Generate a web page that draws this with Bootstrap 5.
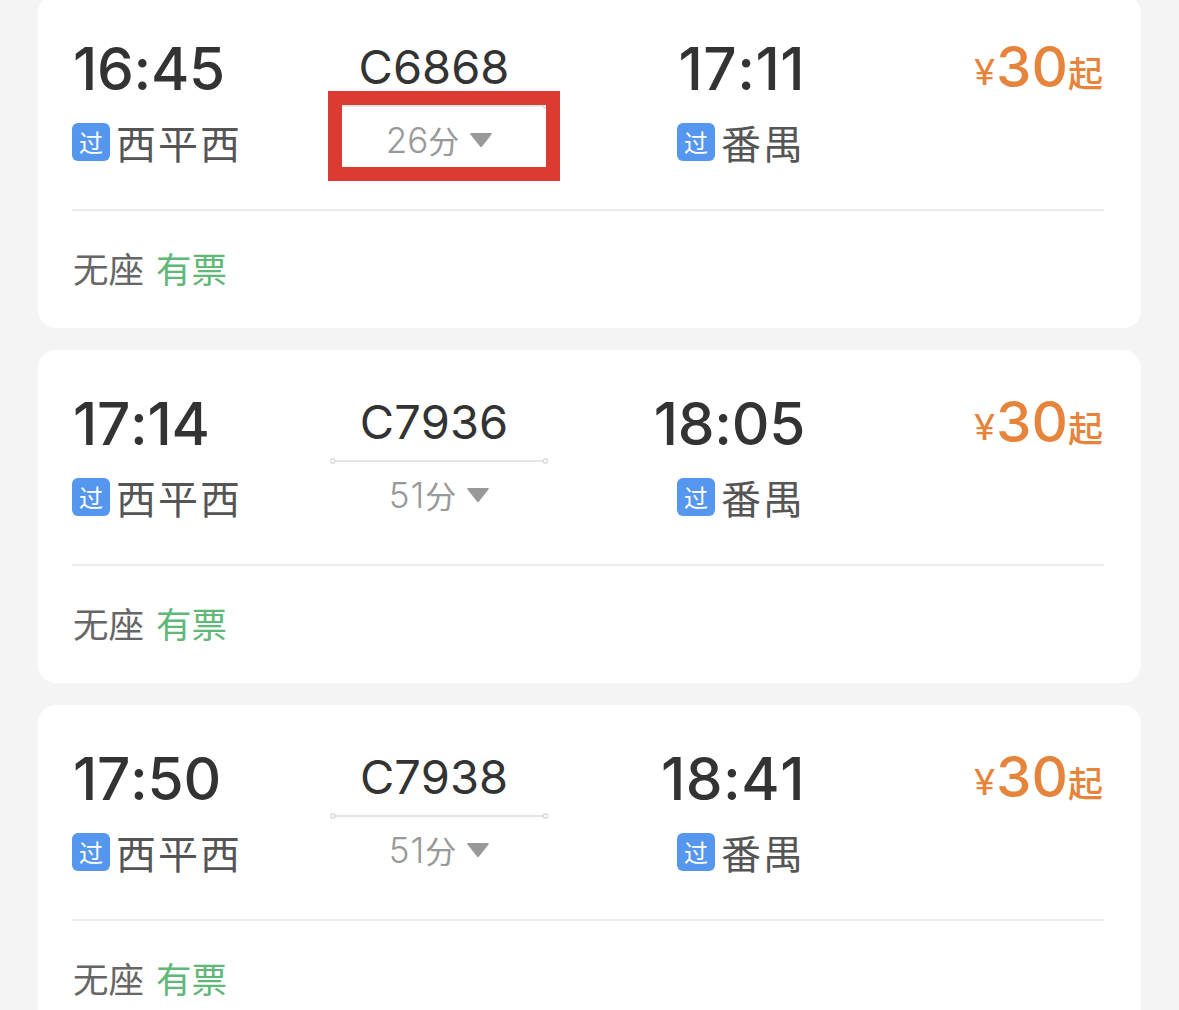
<!DOCTYPE html>
<html lang="zh-CN">
<head>
    <meta charset="UTF-8">
    <meta name="viewport" content="width=device-width, initial-scale=1.0">
    <title>车次列表</title>
    <link href="https://cdn.jsdelivr.net/npm/bootstrap@5.3.0/dist/css/bootstrap.min.css" rel="stylesheet">
    <style>
        body {
            background-color: #f4f4f4;
            color: #333;
            font-family: Inter, "Noto Sans CJK SC", sans-serif;
            font-kerning: none;
            overflow: hidden;
        }
        .train-list {
            padding: 0 38px;
            margin-top: -5px;
            gap: 22px;
        }
        .train {
            height: 333px;
            border: 0;
            border-radius: 18px;
            padding: 0 37px 0 34px;
        }
        .train-main {
            display: grid;
            grid-template-columns: 258px 219px 256px 1fr;
            flex: none;
            height: 216px;
            padding-top: 44px;
            border-bottom: 2px solid #ececec;
        }
        .time {
            padding-left: 1px;
            font-size: 58.5px;
            font-weight: 500;
            line-height: 60px;
            letter-spacing: -0.3px;
        }
        /* the digit 1 is narrow, so these times get more room */
        .time-wide {
            letter-spacing: 0.5px;
        }
        .station {
            margin-top: 21px;
            height: 44px;
            gap: 6px;
            color: #555;
            font-size: 40px;
            line-height: 44px;
            letter-spacing: 2px;
        }
        .station-name {
            padding-top: 6px;
        }
        .pass {
            width: 38px;
            height: 38px;
            border-radius: 6px;
            background-color: #5596ee;
            color: #fff;
            font-size: 24px;
            line-height: 42px;
            letter-spacing: 0;
        }
        .train-no {
            margin-top: 3px;
            padding-right: 11px;
            font-size: 47px;
            font-weight: 400;
            line-height: 50px;
        }
        .route-line {
            margin-top: 10px;
            height: 8px;
        }
        .duration {
            margin-top: 10px;
            height: 40px;
            color: #999;
            font-size: 35px;
            font-weight: 300;
            line-height: 40px;
        }
        .minutes-wide {
            letter-spacing: 1px;
        }
        .unit {
            font-size: 31px;
            font-weight: 400;
        }
        .arrow {
            margin-left: 10px;
        }
        .price {
            margin-top: -2px;
            margin-right: 1px;
            color: #e6843b;
            font-size: 36px;
            line-height: 60px;
        }
        .yen {
            font-size: 35px;
            letter-spacing: 2px;
            transform: translateY(-2px) scaleX(1.1);
        }
        .amount {
            font-size: 56.5px;
            font-weight: 500;
        }
        .from {
            font-size: 35px;
            font-weight: 500;
        }
        .seats {
            height: 117px;
            padding-top: 2px;
            padding-left: 1px;
            gap: 12px;
            color: #666;
            font-size: 35.5px;
        }
        .has-ticket {
            color: #5fb878;
        }
        /* red frame around the duration */
        .highlight {
            left: -2px;
            top: 52px;
            width: 232px;
            height: 90px;
            border: 14px solid #dc3b34;
        }
    </style>
</head>
<body>
<div class="train-list d-flex flex-column">
    <div class="card train">
        <div class="train-main">
            <div>
                <div class="time">16:45</div>
                <div class="station d-flex align-items-center"><span class="pass text-center">过</span><span class="station-name">西平西</span></div>
            </div>
            <div class="position-relative">
                <div class="train-no text-center">C6868</div>
                <svg class="route-line d-block" width="219" height="8" viewBox="0 0 219 8" fill="none" stroke="#dcdcdc" stroke-width="1.5">
                    <circle cx="2.8" cy="4" r="2.2"/><path d="M5 4h208"/><circle cx="215.4" cy="4" r="2.2"/>
                </svg>
                <div class="duration d-flex justify-content-center align-items-baseline">
                    <span>26</span><span class="unit">分</span>
                    <svg class="arrow align-self-center" width="24" height="16" viewBox="0 0 24 16"><path d="M2 1h20q1.500 0 .5 1.500L13 14.500q-1 1-2 0L1.500 2.500Q.5 1 2 1z" fill="#999"/></svg>
                </div>
                <div class="highlight position-absolute"></div>
            </div>
            <div class="text-end">
                <div class="time time-wide">17:11</div>
                <div class="station d-flex align-items-center justify-content-end"><span class="pass text-center">过</span><span class="station-name">番禺</span></div>
            </div>
            <div class="price d-flex justify-content-end align-items-baseline"><span class="yen">¥</span><span class="amount">30</span><span class="from">起</span></div>
        </div>
        <div class="seats d-flex align-items-center"><span>无座</span><span class="has-ticket">有票</span></div>
    </div>

    <div class="card train">
        <div class="train-main">
            <div>
                <div class="time">17:14</div>
                <div class="station d-flex align-items-center"><span class="pass text-center">过</span><span class="station-name">西平西</span></div>
            </div>
            <div>
                <div class="train-no text-center">C7936</div>
                <svg class="route-line d-block" width="219" height="8" viewBox="0 0 219 8" fill="none" stroke="#dcdcdc" stroke-width="1.5">
                    <circle cx="2.8" cy="4" r="2.2"/><path d="M5 4h208"/><circle cx="215.4" cy="4" r="2.2"/>
                </svg>
                <div class="duration d-flex justify-content-center align-items-baseline">
                    <span class="minutes-wide">51</span><span class="unit">分</span>
                    <svg class="arrow align-self-center" width="24" height="16" viewBox="0 0 24 16"><path d="M2 1h20q1.500 0 .5 1.500L13 14.500q-1 1-2 0L1.500 2.500Q.5 1 2 1z" fill="#999"/></svg>
                </div>
            </div>
            <div class="text-end">
                <div class="time">18:05</div>
                <div class="station d-flex align-items-center justify-content-end"><span class="pass text-center">过</span><span class="station-name">番禺</span></div>
            </div>
            <div class="price d-flex justify-content-end align-items-baseline"><span class="yen">¥</span><span class="amount">30</span><span class="from">起</span></div>
        </div>
        <div class="seats d-flex align-items-center"><span>无座</span><span class="has-ticket">有票</span></div>
    </div>

    <div class="card train">
        <div class="train-main">
            <div>
                <div class="time">17:50</div>
                <div class="station d-flex align-items-center"><span class="pass text-center">过</span><span class="station-name">西平西</span></div>
            </div>
            <div>
                <div class="train-no text-center">C7938</div>
                <svg class="route-line d-block" width="219" height="8" viewBox="0 0 219 8" fill="none" stroke="#dcdcdc" stroke-width="1.5">
                    <circle cx="2.8" cy="4" r="2.2"/><path d="M5 4h208"/><circle cx="215.4" cy="4" r="2.2"/>
                </svg>
                <div class="duration d-flex justify-content-center align-items-baseline">
                    <span class="minutes-wide">51</span><span class="unit">分</span>
                    <svg class="arrow align-self-center" width="24" height="16" viewBox="0 0 24 16"><path d="M2 1h20q1.500 0 .5 1.500L13 14.500q-1 1-2 0L1.500 2.500Q.5 1 2 1z" fill="#999"/></svg>
                </div>
            </div>
            <div class="text-end">
                <div class="time time-wide">18:41</div>
                <div class="station d-flex align-items-center justify-content-end"><span class="pass text-center">过</span><span class="station-name">番禺</span></div>
            </div>
            <div class="price d-flex justify-content-end align-items-baseline"><span class="yen">¥</span><span class="amount">30</span><span class="from">起</span></div>
        </div>
        <div class="seats d-flex align-items-center"><span>无座</span><span class="has-ticket">有票</span></div>
    </div>
</div>
<script src="https://cdn.jsdelivr.net/npm/bootstrap@5.3.0/dist/js/bootstrap.bundle.min.js"></script>
</body>
</html>
